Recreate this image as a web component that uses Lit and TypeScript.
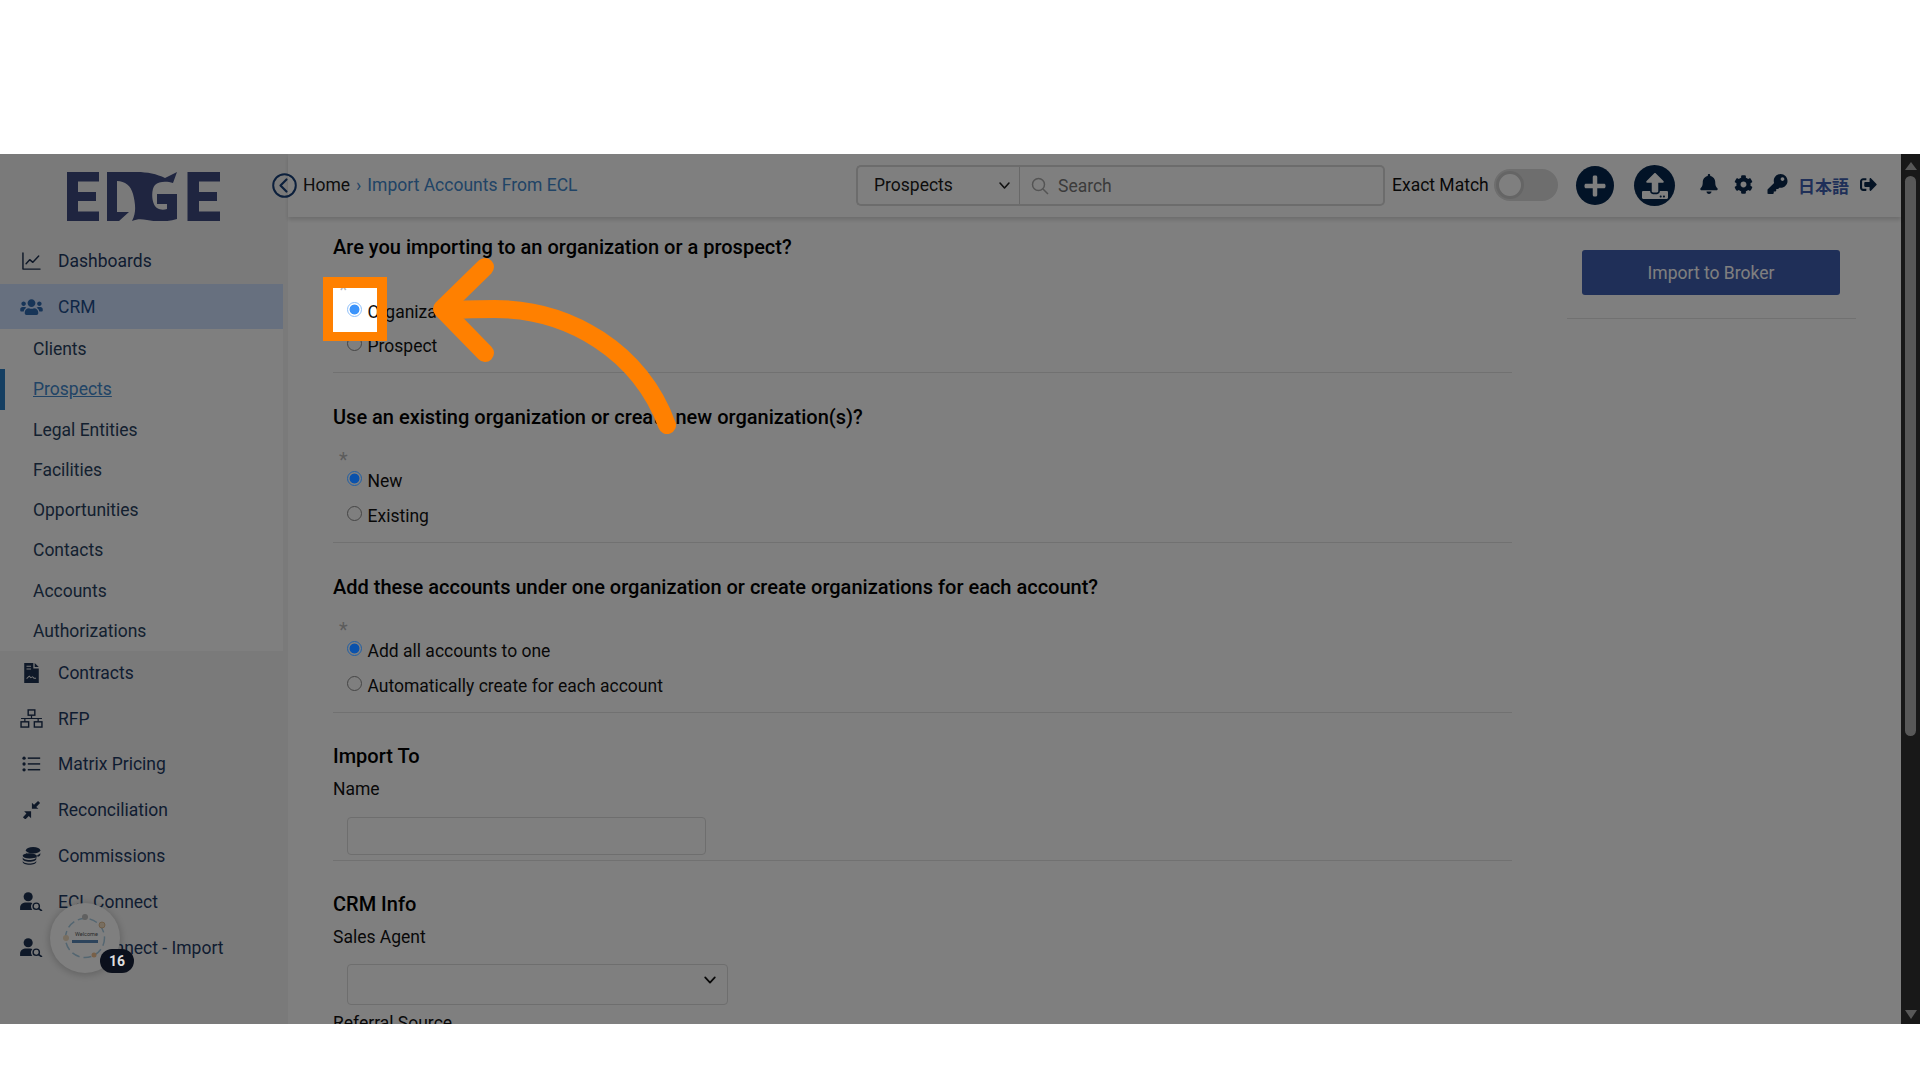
import { LitElement, html, css, svg } from "lit";
import { customElement } from "lit/decorators.js";

const fa = (vb: string, d: string, cls = "") =>
  html`<svg class="ic ${cls}" viewBox="${vb}" fill="currentColor"><path d="${d}"></path></svg>`;

const BELL = "M224 512c35.32 0 63.97-28.65 63.97-63.97H160.03C160.03 483.35 188.68 512 224 512zm215.39-149.71c-19.32-20.76-55.47-51.99-55.47-154.29 0-77.7-54.48-139.9-127.94-155.16V32c0-17.67-14.32-32-31.98-32s-31.98 14.33-31.98 32v20.84C118.56 68.1 64.08 130.3 64.08 208c0 102.3-36.15 133.53-55.47 154.29-6 6.45-8.66 14.16-8.61 21.71.11 16.4 12.98 32 32.1 32h383.8c19.12 0 32-15.6 32.1-32 .05-7.55-2.61-15.27-8.61-21.71z";
const COG = "M487.4 315.7l-42.6-24.6c4.3-23.2 4.3-47 0-70.2l42.6-24.6c4.9-2.8 7.1-8.6 5.5-14-11.1-35.6-30-67.8-54.7-94.6-3.8-4.1-10-5.1-14.8-2.3L380.8 110c-17.9-15.4-38.5-27.3-60.8-35.1V25.8c0-5.6-3.9-10.5-9.4-11.7-36.7-8.2-74.3-7.8-109.2 0-5.5 1.2-9.4 6.1-9.4 11.7V75c-22.2 7.9-42.8 19.8-60.8 35.1L88.7 85.5c-4.9-2.8-11-1.9-14.8 2.3-24.7 26.7-43.6 58.9-54.7 94.6-1.7 5.4.6 11.2 5.5 14L67.3 221c-4.3 23.2-4.3 47 0 70.2l-42.6 24.6c-4.9 2.8-7.1 8.6-5.5 14 11.1 35.6 30 67.8 54.7 94.6 3.8 4.1 10 5.1 14.8 2.3l42.6-24.6c17.9 15.4 38.5 27.3 60.8 35.1v49.2c0 5.6 3.9 10.5 9.4 11.7 36.7 8.2 74.3 7.8 109.2 0 5.5-1.2 9.4-6.1 9.4-11.7v-49.2c22.2-7.9 42.8-19.8 60.8-35.1l42.6 24.6c4.9 2.8 11 1.9 14.8-2.3 24.7-26.7 43.6-58.9 54.7-94.6 1.5-5.5-.7-11.3-5.6-14.1zM256 336c-44.1 0-80-35.9-80-80s35.9-80 80-80 80 35.9 80 80-35.9 80-80 80z";
const KEY = "M512 176.001C512 273.203 433.202 352 336 352c-11.22 0-22.19-1.062-32.827-3.069l-24.012 27.014A23.999 23.999 0 0 1 261.223 384H224v40c0 13.255-10.745 24-24 24h-40v40c0 13.255-10.745 24-24 24H24c-13.255 0-24-10.745-24-24v-78.059c0-6.365 2.529-12.47 7.029-16.971l161.802-161.802C163.108 213.814 160 195.271 160 176 160 78.798 238.797.001 335.999 0 433.488-.001 512 78.511 512 176.001zM336 128c0 26.51 21.49 48 48 48s48-21.49 48-48-21.49-48-48-48-48 21.49-48 48z";
const OUT = "M497 273L329 441c-15 15-41 4.5-41-17v-96H152c-13.3 0-24-10.7-24-24v-96c0-13.3 10.7-24 24-24h136V88c0-21.4 25.9-32 41-17l168 168c9.3 9.4 9.3 24.6 0 34zM192 436v-40c0-6.6-5.4-12-12-12H96c-17.7 0-32-14.3-32-32V160c0-17.7 14.3-32 32-32h84c6.6 0 12-5.4 12-12V76c0-6.6-5.4-12-12-12H96c-53 0-96 43-96 96v192c0 53 43 96 96 96h84c6.6 0 12-5.4 12-12z";
const UPLOAD = "M296 384h-80c-13.3 0-24-10.7-24-24V192h-87.7c-17.8 0-26.7-21.5-14.1-34.1L242.3 5.7c7.5-7.5 19.8-7.5 27.3 0l152.2 152.2c12.6 12.6 3.7 34.1-14.1 34.1H320v168c0 13.3-10.7 24-24 24zm216-8v112c0 13.3-10.7 24-24 24H24c-13.3 0-24-10.7-24-24V376c0-13.3 10.7-24 24-24h136v8c0 30.9 25.1 56 56 56h80c30.9 0 56-25.1 56-56v-8h136c13.3 0 24 10.7 24 24zm-124 88c0-11-9-20-20-20s-20 9-20 20 9 20 20 20 20-9 20-20zm64 0c0-11-9-20-20-20s-20 9-20 20 9 20 20 20 20-9 20-20z";
const PLUS = "M416 208H272V64c0-17.67-14.33-32-32-32h-32c-17.67 0-32 14.33-32 32v144H32c-17.67 0-32 14.33-32 32v32c0 17.67 14.33 32 32 32h144v144c0 17.67 14.33 32 32 32h32c17.67 0 32-14.33 32-32V304h144c17.67 0 32-14.33 32-32v-32c0-17.67-14.33-32-32-32z";
const USERS = "M96 224c35.3 0 64-28.7 64-64s-28.7-64-64-64-64 28.7-64 64 28.7 64 64 64zm448 0c35.3 0 64-28.7 64-64s-28.7-64-64-64-64 28.7-64 64 28.7 64 64 64zm32 32h-64c-17.6 0-33.5 7.1-45.1 18.6 40.3 22.1 68.9 62 75.1 109.4h66c17.7 0 32-14.3 32-32v-32c0-35.3-28.7-64-64-64zm-256 0c61.9 0 112-50.1 112-112S381.9 32 320 32 208 82.1 208 144s50.1 112 112 112zm76.8 32h-8.3c-20.8 10-43.9 16-68.5 16s-47.6-6-68.5-16h-8.3C179.6 288 128 339.6 128 403.2V432c0 26.5 21.5 48 48 48h288c26.5 0 48-21.5 48-48v-28.8c0-63.6-51.6-115.2-115.2-115.2zm-223.7-13.4C161.5 263.1 145.6 256 128 256H64c-35.3 0-64 28.7-64 64v32c0 17.7 14.3 32 32 32h65.9c6.3-47.4 34.9-87.3 75.2-109.4z";

const sideIcons: Record<string, unknown> = {
  chart: html`<svg class="side-ic" viewBox="2 2 21 20" fill="none" stroke="currentColor" stroke-width="1.6" stroke-linecap="round" stroke-linejoin="round"><path d="M3 3v18h19"></path><path d="M6.5 15l4-4.5 3.5 3 6.5-7"></path></svg>`,
  users: html`<svg class="side-ic users" viewBox="0 0 640 512" fill="currentColor"><path d="${USERS}"></path></svg>`,
  contract: html`<svg class="side-ic tall" viewBox="4 1 16 22" fill="currentColor"><path fill-rule="evenodd" d="M4 1h10v6h6v16H4zM15.5 1L20 5.5h-4.500zM6.500 4v1.200h5V4zM6.500 7v1.200h5V7zM7 18.500l2.500-2.500 1.700 1.800 1.800-1 1.500 1.500h2.500v-1h-2l-1.800-1.700-1.800 1-1.800-1.800L6.300 17.800z"></path></svg>`,
  net: html`<svg class="side-ic wide" viewBox="0 0 24 20" fill="none" stroke="currentColor" stroke-width="1.5"><rect x="8.500" y="1" width="7" height="5.500"></rect><rect x="1" y="13.500" width="8" height="5.500"></rect><rect x="15" y="13.500" width="8" height="5.500"></rect><path d="M12 6.500V10M1 10h22M5 10v3.500M19 10v3.500" stroke-width="1.300"></path></svg>`,
  list: html`<svg class="side-ic" viewBox="1 2 23 20" fill="currentColor"><circle cx="3.500" cy="5" r="2"></circle><circle cx="3.500" cy="12" r="2"></circle><circle cx="3.500" cy="19" r="2"></circle><rect x="8" y="4" width="15" height="1.800"></rect><rect x="8" y="11" width="15" height="1.800"></rect><rect x="8" y="18" width="15" height="1.800"></rect></svg>`,
  compress: html`<svg class="side-ic" viewBox="1 1 22 22" fill="currentColor"><path d="M12.500 10.500V3l2.600 2.600L20 1l2.500 2.500-4.700 4.800 2.700 2.200zM3 13.500h8.500V22l-2.800-2.700-4.200 4.200L1.500 21l4.300-4.600z"></path></svg>`,
  coins: html`<svg class="side-ic" viewBox="1 1 22 22.500" fill="currentColor"><ellipse cx="14" cy="5" rx="9" ry="4"></ellipse><path d="M5 8c0 2.200 4 4 9 4s9-1.800 9-4v2.500c0 1.300-1.400 2.400-3.500 3.100v-2l-1 .4v2c-3 .8-6 .6-8-.2z" ></path><ellipse cx="9.500" cy="12" rx="8.500" ry="3.300"></ellipse><path d="M1 13.500c0 2.200 3.800 3.700 8.500 3.700s8.500-1.500 8.500-3.700V16c0 2-3.800 3.500-8.500 3.500S1 18 1 16zM1 18c0 2.200 3.800 3.700 8.500 3.700S18 20.200 18 18v1.500c0 2.200-3.800 3.700-8.500 3.700S1 21.700 1 19.500z"></path></svg>`,
  usersearch: html`<svg class="side-ic wide" viewBox="0 0 24 20" fill="currentColor"><circle cx="8.500" cy="5" r="4.800"></circle><path d="M0 19v-2.500C0 13 3 11 6.500 11h4c1 0 1.800.2 2.500.5-1.500 1.500-2 3.800-1 5.800.3.700.6 1.200 1.100 1.700z"></path><circle cx="17" cy="15" r="3.300" fill="none" stroke="currentColor" stroke-width="1.500"></circle><path d="M19.300 17.300L23 20" fill="none" stroke="currentColor" stroke-width="1.700"></path></svg>`,
};

const chevron = html`<svg class="chev" viewBox="0 0 16 16" fill="none" stroke="currentColor" stroke-width="2" stroke-linecap="round" stroke-linejoin="round"><path d="M2.500 5l5.500 6 5.500-6"></path></svg>`;

const subs = ["Clients", "Prospects", "Legal Entities", "Facilities", "Opportunities", "Contacts", "Accounts", "Authorizations"];
const lower: [string, string][] = [
  ["contract", "Contracts"],
  ["net", "RFP"],
  ["list", "Matrix Pricing"],
  ["compress", "Reconciliation"],
  ["coins", "Commissions"],
  ["usersearch", "ECL Connect"],
  ["usersearch", "ECL Connect - Import"],
];

@customElement("app-root")
export class AppRoot extends LitElement {
  static styles = css`
    :host { display: block; width: 1920px; height: 1080px; background: #fff; font-family: Roboto, "Liberation Sans", sans-serif; font-size: 17.500px; color: #111; overflow: hidden; }
    .top { height: 154px; }
    .app { position: relative; display: flex; height: 870px; overflow: hidden; background: #fff; }
    .sidebar { flex: 0 0 288px; width: 288px; background: #f5f5f5; color: #1f3a63; position: relative; }
    .logo-area { height: 85px; padding: 18px 0 0 67px; box-sizing: border-box; }
    .logo { display: block; width: 153px; height: 49px; color: #3e4a80; }
    .nav { display: flex; align-items: center; height: 45px; width: 283px; }
    .nav.first { padding-bottom: 1px; box-sizing: border-box; }
    .nav.low { height: 45.800px; }
    .nav.on { background: #cfe1ff; color: #1f4e8c; }
    .nav-ic { flex: 0 0 58px; padding: 0 4px 0 8px; display: flex; justify-content: center; box-sizing: border-box; color: #1c3050; }
    .nav.on .nav-ic { color: #2f6ab0; }
    .side-ic { width: 19px; height: 18px; display: block; }
    .side-ic.users { width: 23px; height: 18px; }
    .side-ic.wide { width: 23px; height: 19px; }
    .side-ic.tall { width: 15px; height: 20px; }
    .subs { width: 283px; background: #fff; margin-bottom: -1px; }
    .sub { display: flex; align-items: center; height: 40.250px; padding-left: 33px; box-sizing: border-box; color: #28415f; }
    .sub.on { color: #4288cc; text-decoration: underline; box-shadow: inset 5px 0 0 #2b7fc4; }
    .main { flex: 1; min-width: 0; display: flex; flex-direction: column; }
    .header { display: flex; align-items: center; height: 63px; flex: none; padding-right: 23px; background: #fff; box-shadow: 0 3px 4px rgba(0,0,0,.14); box-sizing: border-box; position: relative; }
    .back { width: 25px; height: 25px; margin-left: -16px; margin-right: 6px; color: #173f78; flex: none; }
    .home { color: #1a1a1a; margin-top: -1px; }
    .sep { color: #4288cc; margin: -1px 6px 0; }
    .crumb { color: #4288cc; margin-top: -1px; }
    .hright { margin-left: auto; display: flex; align-items: center; }
    .scope { width: 164px; height: 41px; box-sizing: border-box; border: 2px solid #d8d8d8; border-right: 1px solid #d0d0d0; border-radius: 5px 0 0 5px; display: flex; align-items: center; justify-content: space-between; padding: 0 8px 0 16px; color: #1a1a1a; }
    .scope span { margin-top: -1px; }
    .scope .chev { width: 13px; height: 13px; color: #222; }
    .search { width: 365px; height: 41px; box-sizing: border-box; border: 2px solid #d8d8d8; border-left: 0; border-radius: 0 5px 5px 0; display: flex; align-items: center; padding-left: 11px; gap: 9px; color: #777; }
    .search svg { width: 18px; height: 18px; color: #a8a8a8; flex: none; }
    .exact { margin-left: 7px; width: 95px; white-space: nowrap; color: #111; margin-top: -2px; }
    .toggle { margin-left: 7px; width: 64px; height: 32px; border-radius: 16px; background: #dcdcdc; display: flex; align-items: center; padding-left: 2px; box-sizing: border-box; margin-top: -2px; }
    .knob { width: 28px; height: 28px; box-sizing: border-box; border-radius: 50%; background: #fff; border: 3px solid #cacaca; }
    .round { border-radius: 50%; background: #04264e; color: #fff; display: flex; align-items: center; justify-content: center; flex: none; }
    .plus { width: 38px; height: 39px; margin-left: 18px; }
    .plus svg { width: 24px; height: 24px; }
    .upl { width: 41px; height: 41px; margin-left: 20px; }
    .upl svg { width: 26px; height: 26px; }
    .ic { display: block; }
    .tool { color: #08264a; flex: none; }
    .bell { margin-left: 25px; width: 18px; height: 20px; margin-top: -3px; }
    .gear { margin-left: 16px; width: 19px; height: 19px; margin-top: -3px; }
    .keyi { margin-left: 14px; width: 21px; height: 20px; margin-top: -3px; }
    .jp { margin-left: 10px; width: 51px; color: #3f5fb0; font: 700 17px "Noto Sans CJK JP", sans-serif; white-space: nowrap; }
    .out { margin-left: 10px; width: 19px; height: 17px; margin-top: -3px; }
    .body { flex: 1; display: flex; min-height: 0; overflow: hidden; }
    .form { margin-left: 45px; width: 1179px; padding-top: 18px; flex: none; }
    .sec { border-bottom: 1px solid #e2e2e2; padding-bottom: 9px; margin-bottom: 32px; }
    .sec.third { margin-bottom: 31px; }
    .sec.flat { margin-bottom: 31px; padding-bottom: 5px; }
    .q { font-size: 20px; font-weight: 500; line-height: 25px; color: #000; }
    .star { height: 16px; margin-top: 17px; padding: 3px 0 0 6px; box-sizing: border-box; color: #b8b8b8; font-size: 20px; line-height: 20px; }
    .row { display: flex; align-items: center; height: 35px; padding-left: 14px; color: #111; }
    .row.nudge { position: relative; top: 1px; }
    .radio { width: 15px; height: 15px; box-sizing: border-box; border-radius: 50%; border: 1.500px solid #8a8a8a; margin: -4px 5.500px 0 0; flex: none; background: #fff; }
    .radio.on { position: relative; z-index: 3; border-color: #2160a6; background: radial-gradient(circle, #0a52ac 4.600px, #808080 5.300px); }
    .radio.lit { border-color: #8ec0fb; background: radial-gradient(circle, #3c94fb 4.600px, #fff 5.300px); }
    .lbl { line-height: 24px; }
    .lbl.sp { margin-top: 8px; }
    .input { margin: 16px 0 0 14px; width: 359px; height: 38px; box-sizing: border-box; border: 1.500px solid #dcdcdc; border-radius: 4px; }
    .selectbox { margin: 15px 0 0 14px; width: 381px; height: 41px; box-sizing: border-box; border: 1.500px solid #dcdcdc; border-radius: 4px; display: flex; justify-content: flex-end; padding: 8px 10px 0 0; }
    .selectbox .chev { width: 14px; height: 14px; color: #111; }
    .ref { margin-top: 6px; line-height: 24px; }
    .side { margin-left: 55px; width: 289px; padding-top: 33px; flex: none; }
    .btn { margin-left: 15px; width: 258px; height: 45px; border-radius: 3px; background: #3e5eb0; color: #fff; display: flex; align-items: center; justify-content: center; font-weight: 400; }
    .rule { margin-top: 23px; border-top: 1px solid #e2e2e2; }
    .scroll { flex: 0 0 19px; width: 19px; background: #303030; display: flex; flex-direction: column; align-items: center; justify-content: space-between; padding: 8px 0 5px; box-sizing: border-box; }
    .track { flex: 1; width: 100%; display: flex; flex-direction: column; align-items: center; }
    .thumb { width: 11px; height: 560px; margin-top: 6px; border-radius: 6px; background: #b0b0b0; }
    .tri { width: 0; height: 0; border-left: 6.500px solid transparent; border-right: 6.500px solid transparent; }
    .tri.up { border-bottom: 8px solid #b0b0b0; }
    .tri.down { border-top: 9px solid #b0b0b0; }
    .floater { position: absolute; left: 50px; top: 749px; width: 70px; height: 70px; border-radius: 50%; background: #fff; box-shadow: 0 1px 8px rgba(0,0,0,.25); }
    .floater svg { display: block; width: 70px; height: 70px; }
    .floater .w { font: 5.500px Roboto, sans-serif; fill: #555; }
    .count { position: absolute; left: 50px; top: 46px; width: 34px; height: 24px; border-radius: 12px; background: #0b101c; color: #ddd; font: 700 14px/24px Roboto, sans-serif; text-align: center; z-index: 3; }
    .spot { position: absolute; left: 323px; top: 123px; width: 64px; height: 64px; box-sizing: border-box; border: 10px solid #ff8000; border-top-width: 11px; border-bottom-width: 9px; box-shadow: 0 0 0 3000px rgba(0,0,0,.5); z-index: 2; }
    .arrow { position: absolute; left: 0; top: 0; width: 1920px; height: 870px; z-index: 4; pointer-events: none; }
    .bottom { height: 56px; }
  `;

  private radio(label: string, cls = "", rowCls = "") {
    return html`<div class="row ${rowCls}"><span class="radio ${cls}"></span><span>${label}</span></div>`;
  }

  render() {
    return html`
      <div class="top"></div>
      <div class="app">
        <aside class="sidebar">
          <div class="logo-area">
            <svg class="logo" viewBox="0 0 153 49" fill="currentColor">
              <path d="M0 0H32V9.500H11V20H29V29H11V39.500H32V49H0Z"></path>
              <path d="M40 0H50V40H62L52 49H40Z"></path>
              <path d="M50 0H70C80 0 90 2 98 6L110 0 106 11C100 9 92 9 88 13 84 17 84 32 90 36 93 38 97 38 100 37V32H90V22H110V47C100 50 90 50 80 48 74 47 70 47 65 49 70 40 68 30 66 22 64 14 58 9 50 9Z"></path>
              <path d="M120.500 0H153V9.500H132V20H150V29H132V39.500H153V49H120.500Z"></path>
            </svg>
          </div>
          <div class="nav first"><span class="nav-ic">${sideIcons.chart}</span><span>Dashboards</span></div>
          <div class="nav on"><span class="nav-ic">${sideIcons.users}</span><span>CRM</span></div>
          <div class="subs">
            ${subs.map((s) => html`<div class="sub ${s === "Prospects" ? "on" : ""}">${s}</div>`)}
          </div>
          ${lower.map(([i, t]) => html`<div class="nav low"><span class="nav-ic">${sideIcons[i]}</span><span>${t}</span></div>`)}
          <div class="floater">
            <svg viewBox="0 0 70 70" fill="none">
              <circle cx="35" cy="35" r="19.500" stroke="#a8cce2" stroke-width="1.500" stroke-dasharray="8 4"></circle>
              <circle cx="52" cy="22" r="3" fill="#f0dcc0" stroke="#d8b080" stroke-width=".8"></circle>
              <circle cx="44" cy="52" r="2.500" fill="#f0c090"></circle>
              <circle cx="16" cy="35" r="3" fill="#f0dcc0"></circle>
              <circle cx="35" cy="14" r="3" fill="#c0c0c0"></circle>
              <text class="w" x="25" y="33">Welcome</text>
              <rect x="22" y="37" width="26" height="3" fill="#5a88b8"></rect>
            </svg>
            <div class="count">16</div>
          </div>
        </aside>
        <div class="main">
          <header class="header">
            <svg class="back" viewBox="0 0 25 25" fill="none" stroke="currentColor"><circle cx="12.500" cy="12.500" r="11.300" stroke-width="2"></circle><path d="M14.500 6.500l-6 6 6 6" stroke-width="2.200" stroke-linecap="round" stroke-linejoin="round"></path></svg>
            <span class="home">Home</span><span class="sep">›</span><span class="crumb">Import Accounts From ECL</span>
            <div class="hright">
              <div class="scope"><span>Prospects</span>${chevron}</div>
              <div class="search">
                <svg viewBox="0 0 18 18" fill="none" stroke="currentColor" stroke-width="1.500"><circle cx="7.500" cy="7.500" r="6"></circle><path d="M12 12l5 5"></path></svg>
                <span>Search</span>
              </div>
              <span class="exact">Exact Match</span>
              <div class="toggle"><span class="knob"></span></div>
              <div class="round plus">${fa("0 0 448 512", PLUS)}</div>
              <div class="round upl">${fa("0 0 512 512", UPLOAD)}</div>
              ${fa("0 0 448 512", BELL, "tool bell")}
              ${fa("0 0 512 512", COG, "tool gear")}
              ${fa("0 0 512 512", KEY, "tool keyi")}
              <span class="jp">日本語</span>
              ${fa("0 0 512 512", OUT, "tool out")}
            </div>
          </header>
          <div class="body">
            <div class="form">
              <section class="sec">
                <div class="q">Are you importing to an organization or a prospect?</div>
                <div class="star">*</div>
                ${this.radio("Organization", "on lit", "nudge")}
                ${this.radio("Prospect")}
              </section>
              <section class="sec">
                <div class="q">Use an existing organization or create new organization(s)?</div>
                <div class="star">*</div>
                ${this.radio("New", "on")}
                ${this.radio("Existing")}
              </section>
              <section class="sec third">
                <div class="q">Add these accounts under one organization or create organizations for each account?</div>
                <div class="star">*</div>
                ${this.radio("Add all accounts to one", "on")}
                ${this.radio("Automatically create for each account")}
              </section>
              <section class="sec flat">
                <div class="q">Import To</div>
                <div class="lbl sp">Name</div>
                <div class="input"></div>
              </section>
              <section>
                <div class="q">CRM Info</div>
                <div class="lbl sp">Sales Agent</div>
                <div class="selectbox">${chevron}</div>
                <div class="ref">Referral Source</div>
              </section>
            </div>
            <div class="side">
              <div class="btn">Import to Broker</div>
              <div class="rule"></div>
            </div>
          </div>
        </div>
        <div class="scroll">
          <div class="track"><span class="tri up"></span><span class="thumb"></span></div>
          <span class="tri down"></span>
        </div>
        <div class="spot"></div>
        <svg class="arrow" viewBox="0 154 1920 870" fill="none" stroke="#ff8000" stroke-width="18" stroke-linecap="round" stroke-linejoin="round">
          ${svg`<path d="M667 425C640 352 570 309 495 309 475 309 460 309 445 311"></path><path d="M485 267L442 309 485 353"></path>`}
        </svg>
      </div>
      <div class="bottom"></div>
    `;
  }
}
